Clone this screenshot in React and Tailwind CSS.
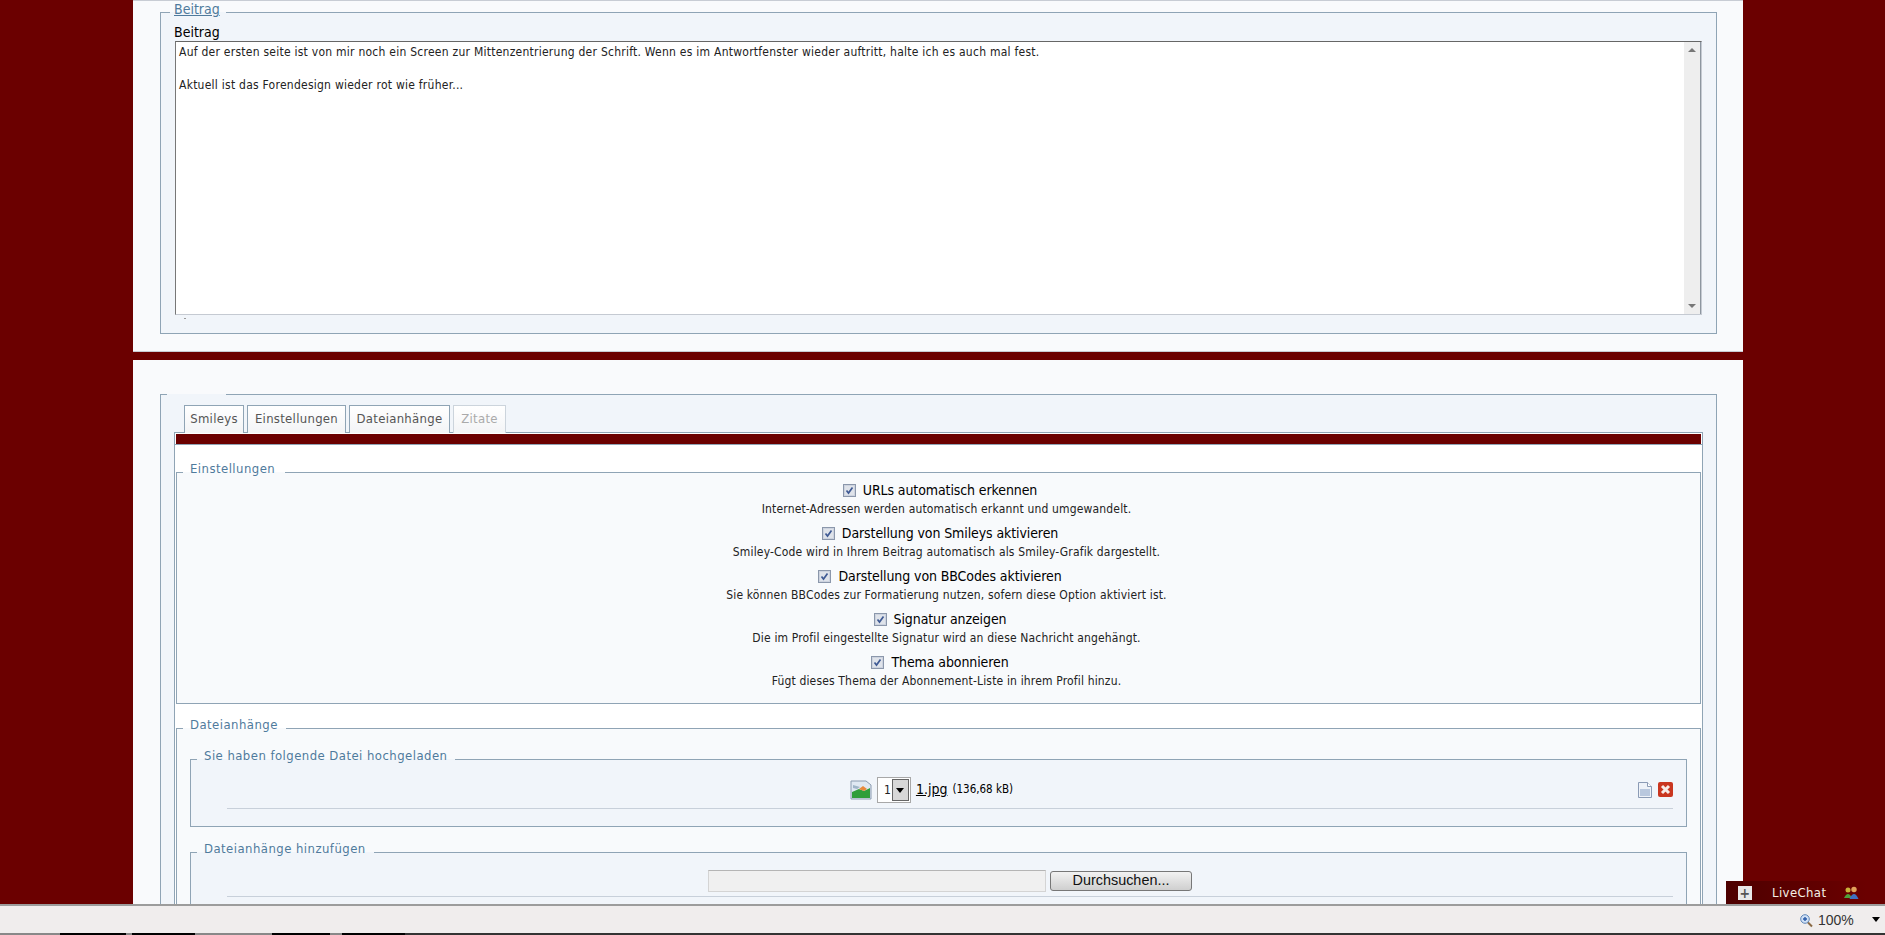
import React from 'react';

const OPTIONS = [
  { label: 'URLs automatisch erkennen', hint: 'Internet-Adressen werden automatisch erkannt und umgewandelt.' },
  { label: 'Darstellung von Smileys aktivieren', hint: 'Smiley-Code wird in Ihrem Beitrag automatisch als Smiley-Grafik dargestellt.' },
  { label: 'Darstellung von BBCodes aktivieren', hint: 'Sie können BBCodes zur Formatierung nutzen, sofern diese Option aktiviert ist.' },
  { label: 'Signatur anzeigen', hint: 'Die im Profil eingestellte Signatur wird an diese Nachricht angehängt.' },
  { label: 'Thema abonnieren', hint: 'Fügt dieses Thema der Abonnement-Liste in ihrem Profil hinzu.' },
];

const Check = () => (
  <svg width="13" height="13" viewBox="0 0 13 13" className="shrink-0">
    <rect x="0.5" y="0.5" width="12" height="12" fill="#cdd3df" stroke="#8b97ab" />
    <rect x="2" y="2" width="9" height="9" fill="#dfe3ea" />
    <path d="M3.5 6.5 L5.5 9 L9.5 3.5" fill="none" stroke="#3f5a94" strokeWidth="1.7" />
  </svg>
);

const ImageIcon = () => (
  <svg width="22" height="20" viewBox="0 0 22 20">
    <path d="M1 1 H16 L21 5 V19 H1 Z" fill="#dfe8f2" stroke="#8b9bb0" />
    <path d="M2 12 L9 9 L14 11 L20 8 V18 H2 Z" fill="#2f9e3a" />
    <path d="M9 9 L13 6 L17 9 L14 11 Z" fill="#e88a3c" />
    <path d="M3 5 L10 7 L7 9 L3 8 Z" fill="#9fb4c8" />
  </svg>
);

const DocIcon = () => (
  <svg width="14" height="16" viewBox="0 0 14 16">
    <path d="M0.5 0.5 H9.5 L13.5 4.5 V15.5 H0.5 Z" fill="#eef2f8" stroke="#8b9bb5" />
    <rect x="2" y="7" width="10" height="7" fill="#b9c8de" />
    <path d="M9.5 0.5 V4.5 H13.5" fill="#fff" stroke="#8b9bb5" />
  </svg>
);

const DeleteIcon = () => (
  <svg width="15" height="15" viewBox="0 0 15 15">
    <rect width="15" height="15" rx="2" fill="#c9361f" />
    <path d="M4 4 L11 11 M11 4 L4 11" stroke="#f6ece8" strokeWidth="3" />
  </svg>
);

const PeopleIcon = () => (
  <svg width="15" height="13" viewBox="0 0 15 13">
    <circle cx="4" cy="4" r="2.5" fill="#c9b13a" />
    <path d="M0 12 Q4 4 8 12 Z" fill="#4fa03a" />
    <circle cx="10" cy="3.5" r="2.7" fill="#e2a35c" />
    <path d="M5.5 13 Q10 3 14.5 13 Z" fill="#3f6fc0" />
  </svg>
);

const ZoomIcon = () => (
  <svg width="13" height="14" viewBox="0 0 13 14">
    <circle cx="5" cy="5" r="4.3" fill="#cfe0f5" stroke="#5f86b8" />
    <path d="M3 5 H7 M5 3 V7" stroke="#2a5aa8" strokeWidth="1.4" />
    <path d="M8 8.5 L12 12.5" stroke="#8a6a45" strokeWidth="2" />
  </svg>
);

const Tab = ({ label, width, disabled }) => (
  <div
    className={`${width} h-[28px] mr-[3px] pb-[2px] flex items-center justify-center border border-b-0 bg-gradient-to-b from-white to-[#f3f4f6] text-[13px] tracking-[0.3px] ${
      disabled ? 'border-[#ccd4dc] text-[#aaaaaa]' : 'border-[#8fa4b5] text-[#555555]'
    }`}
  >
    {label}
  </div>
);

const legendText = 'h-[16px] leading-[10px] text-[13px] tracking-[0.45px] text-[#4f7a9c]';

const App = () => {
  return (
    <div className="relative h-[935px] overflow-hidden bg-[#6b0000] font-['DejaVu_Sans_Condensed','DejaVu_Sans',sans-serif] text-[12px] text-[#222222]">
      {/* Post panel */}
      <div className="ml-[133px] w-[1610px] h-[352px] pt-[3px] pl-[27px] pr-[26px] bg-[#f9fafc] border-t border-b border-[#c8ccd4]">
        <fieldset className="h-[330px] border border-[#8fa4b5] bg-[#f1f5fa] px-[14px]">
          <legend className="-ml-[5px] pl-[4px] pr-[6px] h-[16px] leading-[10px] text-[14px] text-[#4f7a9c] underline">Beitrag</legend>
          <div className="-ml-[1px] h-[21px] leading-[24px] text-[14px] text-black">Beitrag</div>
          <div className="flex h-[274px] border border-[#c5cad2] border-t-[#666666] border-l-[#777777] bg-white">
            <div className="flex-1 px-[3px] pt-[2px] leading-[16.5px] tracking-[0.25px]">
              <p>Auf der ersten seite ist von mir noch ein Screen zur Mittenzentrierung der Schrift. Wenn es im Antwortfenster wieder auftritt, halte ich es auch mal fest.</p>
              <p className="mt-[16.5px]">Aktuell ist das Forendesign wieder rot wie früher...</p>
            </div>
            <div className="w-[17px] flex flex-col justify-between items-center py-[6px] bg-[#eeeeee] border-r border-[#8d96a0]">
              <div className="border-x-[4px] border-x-transparent border-b-[4px] border-b-[#777777]"></div>
              <div className="border-x-[4px] border-x-transparent border-t-[4px] border-t-[#777777]"></div>
            </div>
          </div>
          <div className="ml-[9px] mt-[3px] h-[1px] w-[2px] bg-[#999999]"></div>
        </fieldset>
      </div>

      {/* Options panel */}
      <div className="mt-[8px] ml-[133px] w-[1610px] h-[600px] pt-[34px] pl-[27px] pr-[26px] bg-[#f9fafc]">
        <fieldset className="border border-[#8fa4b5] bg-[#f1f5fa] px-[13px] pt-[10px] pb-[20px]">
          <legend className="-ml-[7px] w-[59px] h-[1px]"></legend>
          <div className="flex ml-[10px]">
            <Tab label="Smileys" width="w-[60px]" />
            <Tab label="Einstellungen" width="w-[99px]" />
            <Tab label="Dateianhänge" width="w-[101px]" />
            <Tab label="Zitate" width="w-[53px]" disabled />
          </div>
          <div className="border border-[#8fa4b5] bg-white px-[1px] pb-[20px] -mt-px">
            <div className="h-[10px] mt-[1px] bg-[#6b0000]"></div>
            <div className="h-[1px] bg-[#8fa4b5] -mx-[1px]"></div>

            <fieldset className="mt-[19px] h-[240px] border border-[#8fa4b5] bg-[#f8fafc] pl-[16px]">
              <legend className={`-ml-[10px] pl-[7px] pr-[10px] ${legendText}`}>Einstellungen</legend>
              {OPTIONS.map((option) => (
                <div key={option.label} className="mb-[7px] text-center">
                  <div className="flex justify-center items-center gap-[7px] h-[20px] pr-[13px] text-[14px] tracking-[-0.1px] text-black">
                    <Check />
                    <span>{option.label}</span>
                  </div>
                  <div className="h-[16px] leading-[18px] tracking-[0.16px]">{option.hint}</div>
                </div>
              ))}
            </fieldset>

            <fieldset className="mt-[16px] border border-[#8fa4b5] bg-[#f8fafc] px-[13px] pt-[15px] pb-[20px]">
              <legend className={`-ml-[7px] pl-[7px] pr-[8px] ${legendText}`}>Dateianhänge</legend>

              <fieldset className="h-[76px] border border-[#8fa4b5] bg-[#f1f5fa] pl-[36px] pr-[13px]">
                <legend className={`-ml-[30px] pl-[7px] pr-[8px] ${legendText}`}>Sie haben folgende Datei hochgeladen</legend>
                <div className="flex items-center h-[42px] pt-[4px] border-b border-[#c8d0da]">
                  <div className="flex-1 flex justify-center items-center gap-[5px] pr-[2px]">
                    <ImageIcon />
                    <div className="flex items-center justify-between w-[34px] h-[26px] pl-[6px] pr-[1px] border border-[#a8a8a8] bg-white">
                      <span>1</span>
                      <div className="w-[17px] h-[22px] flex justify-center pt-[8px] border border-[#666666] bg-[#d8d8d8]">
                        <div className="h-0 border-x-[4px] border-x-transparent border-t-[5px] border-t-black"></div>
                      </div>
                    </div>
                    <span className="text-[14px] text-black underline">1.jpg</span>
                    <span className="text-[11.5px] text-black">(136,68 kB)</span>
                  </div>
                  <div className="flex items-center gap-[6px]">
                    <DocIcon />
                    <DeleteIcon />
                  </div>
                </div>
              </fieldset>

              <fieldset className="mt-[17px] h-[80px] border border-[#8fa4b5] bg-[#f1f5fa] pl-[36px] pr-[13px]">
                <legend className={`-ml-[30px] pl-[7px] pr-[8px] ${legendText}`}>Dateianhänge hinzufügen</legend>
                <div className="flex justify-center items-center gap-[4px] h-[37px] pt-[5px] border-b border-[#c8d0da]">
                  <div className="w-[338px] h-[22px] border border-[#d4d4d4] border-t-[#b5b5b5] bg-[#f0f0f0]"></div>
                  <button className="w-[142px] h-[20px] rounded-[3px] border border-[#777777] bg-gradient-to-b from-[#f2f2f2] to-[#cfcfcf] font-['Liberation_Sans',sans-serif] text-[14.4px] leading-none text-[#111111]">
                    Durchsuchen...
                  </button>
                </div>
              </fieldset>
            </fieldset>
          </div>
        </fieldset>
      </div>

      {/* LiveChat tab */}
      <div className="absolute left-[1726px] top-[881px] w-[140px] h-[23px] flex items-center pl-[12px] bg-gradient-to-r from-[#4d0000] via-[#5c0000] to-[#6b0000] text-[13px] tracking-[0.4px] text-[#f5f0e6]">
        <div className="w-[14px] h-[14px] flex items-center justify-center bg-[#e8e8e8] text-[#555555] text-[14px] font-bold leading-none">+</div>
        <span className="ml-[20px] w-[72px]">LiveChat</span>
        <PeopleIcon />
      </div>

      {/* Browser status bar */}
      <div className="absolute left-0 right-0 top-[904px] h-[31px] border-t-2 border-[#9c9c9c] bg-[#f0eded]">
        <div className="absolute left-[1800px] top-[4px] flex items-center gap-[5px] font-['Liberation_Sans',sans-serif] text-[14px] text-[#333333]">
          <ZoomIcon />
          <span>100%</span>
        </div>
        <div className="absolute left-[1872px] top-[11px] border-x-[4px] border-x-transparent border-t-[5px] border-t-black"></div>
        <div className="absolute left-0 right-0 bottom-0 h-[2px] flex bg-[#333333]">
          <div className="w-[60px] bg-[#888888]"></div>
          <div className="w-[66px] bg-black"></div>
          <div className="w-[6px] bg-[#888888]"></div>
          <div className="w-[63px] bg-black"></div>
          <div className="w-[77px] bg-[#888888]"></div>
          <div className="w-[58px] bg-black"></div>
          <div className="w-[12px] bg-[#888888]"></div>
          <div className="w-[63px] bg-black"></div>
        </div>
      </div>
    </div>
  );
};

export default App;
